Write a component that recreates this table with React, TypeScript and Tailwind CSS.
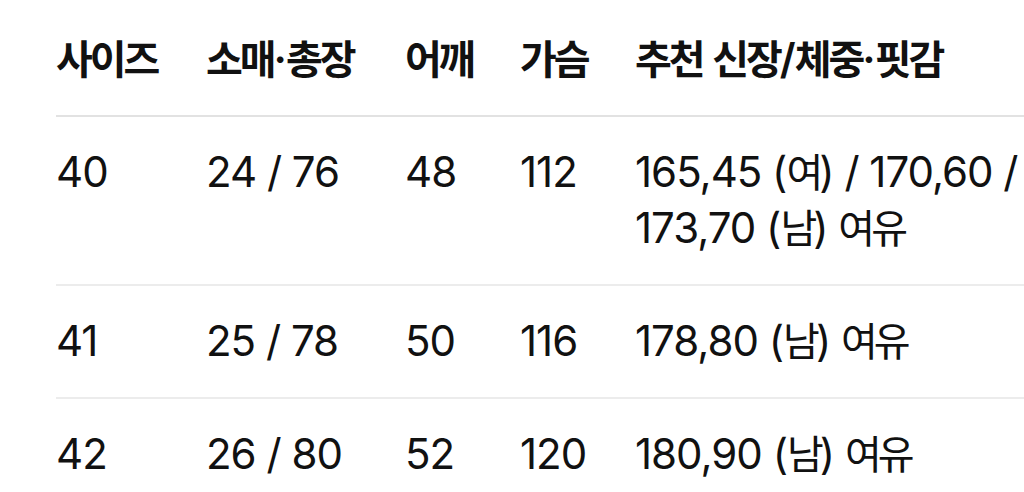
import React from "react";

type Row = {
  size: string;
  sleeve: string;
  shoulder: string;
  chest: string;
  fit: string[];
};

const rows: Row[] = [
  { size: "40", sleeve: "24 / 76", shoulder: "48", chest: "112", fit: ["165,45 (여) / 170,60 /", "173,70 (남) 여유"] },
  { size: "41", sleeve: "25 / 78", shoulder: "50", chest: "116", fit: ["178,80 (남) 여유"] },
  { size: "42", sleeve: "26 / 80", shoulder: "52", chest: "120", fit: ["180,90 (남) 여유"] },
];

const cols = "grid grid-cols-[150px_199px_115px_115px_400px]";

// Hangul runs get a narrower setting so they sit closer to the iOS font
const Ko: React.FC<{ text: string; head?: boolean }> = ({ text, head }) => {
  const parts = text.split(/([\uAC00-\uD7A3]+)/);
  return (
    <>
      {parts.map((p, i) =>
        /[\uAC00-\uD7A3]/.test(p) ? (
          <span
            key={i}
            className={head ? "text-[40px] leading-none tracking-[-3px]" : "text-[40px] leading-none tracking-[-4px]"}
          >
            {p}
          </span>
        ) : (
          <span key={i}>{p}</span>
        )
      )}
    </>
  );
};

const App: React.FC = () => {
  return (
    <div
      className="w-[1024px] h-[492px] overflow-hidden bg-white text-[#111111]"
      style={{ fontFamily: 'Inter, "Noto Sans CJK KR", sans-serif' }}
    >
      <div className="ml-[56px] w-[1100px] text-[42px] leading-[56px] tracking-[-1px]">
        {/* header */}
        <div className={`${cols} pt-[31px] pb-[28px] border-b-2 border-[#e2e2e2] font-semibold whitespace-nowrap`}>
          <div><Ko head text="사이즈" /></div>
          <div><Ko head text="소매·총장" /></div>
          <div><Ko head text="어깨" /></div>
          <div><Ko head text="가슴" /></div>
          <div><Ko head text="추천 신장/체중·핏감" /></div>
        </div>

        {rows.map((r) => (
          <div key={r.size} className={`${cols} pt-[27px] pb-[28px] border-b-2 border-[#ececec] whitespace-nowrap`}>
            <div>{r.size}</div>
            <div>{r.sleeve}</div>
            <div>{r.shoulder}</div>
            <div>{r.chest}</div>
            <div>
              {r.fit.map((line) => (
                <div key={line}><Ko text={line} /></div>
              ))}
            </div>
          </div>
        ))}
      </div>
    </div>
  );
};

export default App;
